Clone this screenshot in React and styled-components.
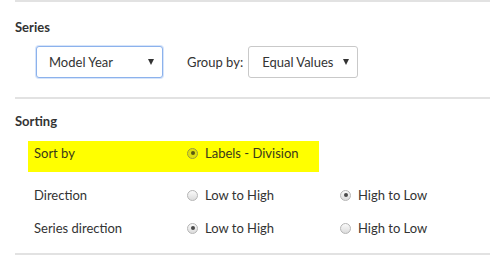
import React from 'react';
import styled, { createGlobalStyle } from 'styled-components';

const GlobalStyle = createGlobalStyle`
  html, body {
    margin: 0;
    padding: 0;
    background: #fff;
  }
  body {
    font-family: Lato, "Open Sans", sans-serif;
    color: #333;
  }
`;

const Panel = styled.div`
  width: 475px;
  margin-left: 15px;
`;

const Divider = styled.div`
  height: 2px;
  background: #e2e2e2;
`;

const Section = styled.section`
  padding-top: ${(p) => p.$top}px;
  padding-bottom: ${(p) => p.$bottom}px;
`;

const Title = styled.h3`
  margin: 0;
  font-size: 13px;
  line-height: 16px;
  font-weight: 700;
  color: #333;
`;

const SelectRow = styled.div`
  display: flex;
  align-items: center;
  margin-top: 11px;
  padding-left: 21px;
  font-size: 13px;
`;

const SelectBox = styled.div`
  box-sizing: border-box;
  width: ${(p) => p.$width}px;
  height: 32px;
  display: flex;
  align-items: center;
  justify-content: space-between;
  padding: 0 8px 0 ${(p) => p.$pad}px;
  border: 1px solid ${(p) => (p.$focused ? '#8cb2ec' : '#c9c9c9')};
  border-radius: 3px;
  box-shadow: ${(p) => (p.$focused ? '0 0 0 1px #d6e4fa' : 'none')};
  color: #333;
  background: #fff;
`;

const Caret = styled.span`
  width: 0;
  height: 0;
  border-left: 3px solid transparent;
  border-right: 3px solid transparent;
  border-top: 6px solid #333;
`;

const GroupLabel = styled.span`
  margin: 0 5px 0 24px;
`;

const Rows = styled.div`
  margin-top: 12px;
  margin-left: 13px;
`;

const Row = styled.div`
  display: grid;
  grid-template-columns: 153px 153px auto;
  align-items: center;
  width: 291px;
  box-sizing: border-box;
  padding: ${(p) => p.$pad};
  padding-left: 6px;
  font-size: 13px;
  line-height: 16px;
  background: ${(p) => (p.$highlight ? '#ffff00' : 'transparent')};
  color: ${(p) => (p.$highlight ? '#3a3a1a' : '#333')};
`;

const Option = styled.label`
  display: flex;
  align-items: center;
  gap: 7px;
  white-space: nowrap;
`;

const Radio = styled.span`
  width: 11px;
  height: 11px;
  box-sizing: border-box;
  border-radius: 50%;
  border: 1px solid ${(p) => (p.$dim ? '#9a9a40' : '#b5b5b5')};
  background: ${(p) =>
    p.$dim
      ? 'radial-gradient(circle, #d8d820 0%, #e6e600 100%)'
      : 'linear-gradient(#fafafa, #dcdcdc)'};
  display: flex;
  align-items: center;
  justify-content: center;

  &::after {
    content: '';
    width: 4px;
    height: 4px;
    border-radius: 50%;
    background: ${(p) => (p.$dim ? '#5a5a10' : '#4a4a4a')};
    display: ${(p) => (p.$checked ? 'block' : 'none')};
  }
`;

const RadioOption = ({ label, checked, dim }) => (
  <Option>
    <Radio $checked={checked} $dim={dim} />
    {label}
  </Option>
);

export default function App() {
  return (
    <Panel>
      <GlobalStyle />
      <Divider />
      <Section $top={17} $bottom={19}>
        <Title>Series</Title>
        <SelectRow>
          <SelectBox $width={127} $pad={12} $focused>
            Model Year
            <Caret />
          </SelectBox>
          <GroupLabel>Group by:</GroupLabel>
          <SelectBox $width={110} $pad={13}>
            Equal Values
            <Caret />
          </SelectBox>
        </SelectRow>
      </Section>
      <Divider />
      <Section $top={14} $bottom={0}>
        <Title>Sorting</Title>
        <Rows>
          <Row $highlight $pad="4px 0 11px">
            <span>Sort by</span>
            <RadioOption label="Labels - Division" checked dim />
          </Row>
          <Row $pad="15px 0 17px">
            <span>Direction</span>
            <RadioOption label="Low to High" />
            <RadioOption label="High to Low" checked />
          </Row>
          <Row $pad="0 0 17px">
            <span>Series direction</span>
            <RadioOption label="Low to High" checked />
            <RadioOption label="High to Low" />
          </Row>
        </Rows>
      </Section>
      <Divider />
    </Panel>
  );
}
